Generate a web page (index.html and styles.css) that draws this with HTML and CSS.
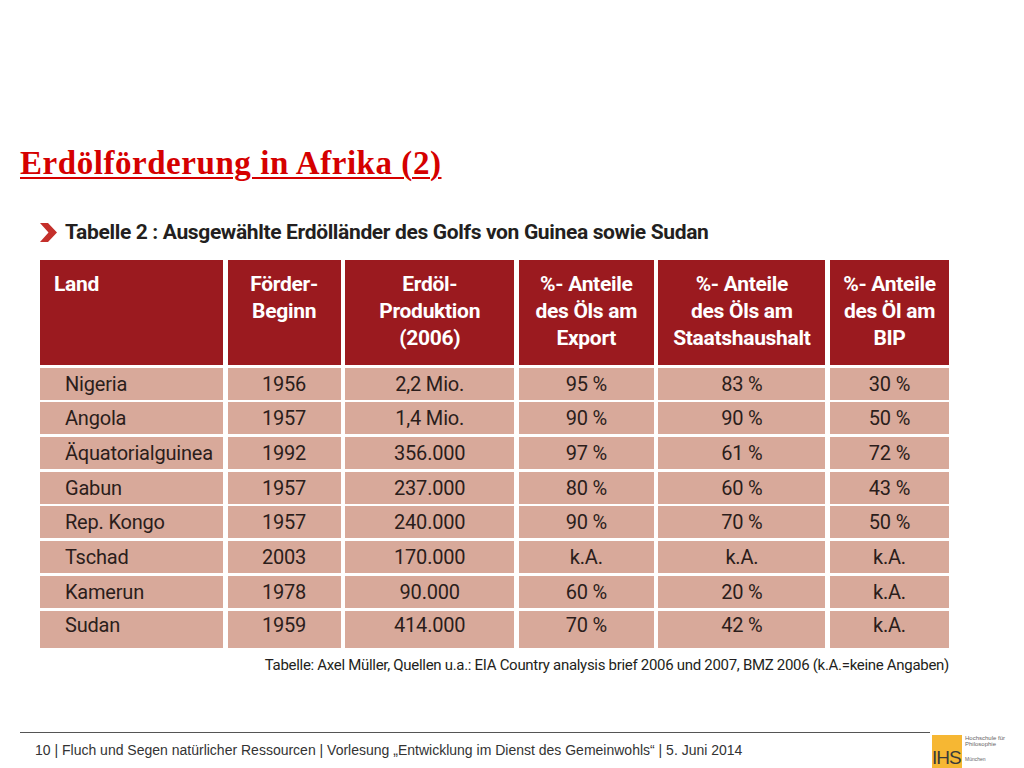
FILE: index.html
```html
<!DOCTYPE html>
<html lang="de">
<head>
<meta charset="utf-8">
<title>Erdölförderung in Afrika (2)</title>
<link rel="stylesheet" href="styles.css">
</head>
<body>
<div class="slide">
  <h1 class="title">Erdölförderung in Afrika (2)</h1>

  <div class="subtitle">
    <svg class="chevron" width="18" height="19" viewBox="0 0 18 19"><polygon points="0,0 8,0 17,9.5 8,19 0,19 8.5,9.5" fill="#c4302b"/></svg>
    <span>Tabelle 2 : Ausgewählte Erdölländer des Golfs von Guinea sowie Sudan</span>
  </div>

  <div class="table">
    <div class="th th-left">Land</div>
    <div class="th">Förder-<br>Beginn</div>
    <div class="th">Erdöl-<br>Produktion<br>(2006)</div>
    <div class="th">%- Anteile<br>des Öls am<br>Export</div>
    <div class="th">%- Anteile<br>des Öls am<br>Staatshaushalt</div>
    <div class="th">%- Anteile<br>des Öl am<br>BIP</div>

    <div class="td td-left">Nigeria</div><div class="td">1956</div><div class="td">2,2 Mio.</div><div class="td">95 %</div><div class="td">83 %</div><div class="td">30 %</div>
    <div class="td td-left">Angola</div><div class="td">1957</div><div class="td">1,4 Mio.</div><div class="td">90 %</div><div class="td">90 %</div><div class="td">50 %</div>
    <div class="td td-left">Äquatorialguinea</div><div class="td">1992</div><div class="td">356.000</div><div class="td">97 %</div><div class="td">61 %</div><div class="td">72 %</div>
    <div class="td td-left">Gabun</div><div class="td">1957</div><div class="td">237.000</div><div class="td">80 %</div><div class="td">60 %</div><div class="td">43 %</div>
    <div class="td td-left">Rep. Kongo</div><div class="td">1957</div><div class="td">240.000</div><div class="td">90 %</div><div class="td">70 %</div><div class="td">50 %</div>
    <div class="td td-left">Tschad</div><div class="td">2003</div><div class="td">170.000</div><div class="td">k.A.</div><div class="td">k.A.</div><div class="td">k.A.</div>
    <div class="td td-left">Kamerun</div><div class="td">1978</div><div class="td">90.000</div><div class="td">60 %</div><div class="td">20 %</div><div class="td">k.A.</div>
    <div class="td td-left last">Sudan</div><div class="td last">1959</div><div class="td last">414.000</div><div class="td last">70 %</div><div class="td last">42 %</div><div class="td last">k.A.</div>
  </div>

  <div class="caption">Tabelle: Axel Müller, Quellen u.a.: EIA Country analysis brief 2006 und 2007, BMZ 2006 (k.A.=keine Angaben)</div>

  <div class="footer">
    <div class="footer-text">10 | Fluch und Segen natürlicher Ressourcen | Vorlesung „Entwicklung im Dienst des Gemeinwohls“ | 5. Juni 2014</div>
    <div class="logo">
      <div class="logo-box"><span class="logo-ihs">IHS</span></div>
      <div class="logo-words">
        <span class="logo-small">Hochschule für<br>Philosophie</span>
        <span class="logo-small logo-city">München</span>
      </div>
    </div>
  </div>
</div>
</body>
</html>
```

FILE: styles.css
```css
html, body {
  margin: 0;
  padding: 0;
  background: #ffffff;
}

.slide {
  width: 1024px;
  height: 768px;
  display: flex;
  flex-direction: column;
  overflow: hidden;
}

.title {
  margin: 141px 0 0 20px;
  font-family: "Liberation Serif", "Times New Roman", serif;
  font-weight: bold;
  font-size: 33px;
  letter-spacing: 0.55px;
  line-height: 44px;
  color: #d50000;
  text-decoration: underline;
  text-decoration-thickness: 2px;
  text-underline-offset: 3px;
}

.subtitle {
  margin: 35px 0 0 40px;
  display: flex;
  align-items: center;
  gap: 7px;
  font-family: Roboto, "Noto Sans", sans-serif;
  font-weight: bold;
  font-size: 21px;
  letter-spacing: -0.35px;
  line-height: 24px;
  color: #231f20;
}

.chevron {
  flex: none;
}

.table {
  margin: 16px 0 0 40px;
  display: grid;
  grid-template-columns: 183px 113px 169px 135px 167px 119px;
  grid-template-rows: 105px repeat(7, 32px) 37px;
  column-gap: 4.6px;
  row-gap: 2.7px;
  font-family: Roboto, "Noto Sans", sans-serif;
}

.th {
  background: #9b1a1f;
  color: #ffffff;
  font-weight: bold;
  font-size: 21px;
  letter-spacing: -0.3px;
  line-height: 27px;
  text-align: center;
  padding-top: 11px;
}

.th-left {
  text-align: left;
  padding-left: 14px;
}

.td {
  background: #d8a99a;
  color: #2b1d1b;
  font-size: 20px;
  letter-spacing: -0.2px;
  display: flex;
  align-items: center;
  justify-content: center;
}

.td-left {
  justify-content: flex-start;
  padding-left: 25px;
}

.td.last {
  align-items: flex-start;
  padding-top: 2px;
}

.caption {
  margin: 7px 0 0 0;
  width: 949px;
  text-align: right;
  font-family: Roboto, "Noto Sans", sans-serif;
  font-size: 15px;
  letter-spacing: -0.3px;
  line-height: 20px;
  color: #231f20;
}

.footer {
  margin-top: auto;
  display: flex;
  align-items: flex-start;
  height: 36px;
}

.footer-text {
  margin-left: 20px;
  width: 910px;
  border-top: 1px solid #555555;
  padding: 9px 0 0 15px;
  box-sizing: border-box;
  font-family: "Liberation Sans", Arial, sans-serif;
  font-size: 14px;
  letter-spacing: 0;
  color: #333333;
  line-height: 16px;
}

.logo {
  margin-left: 2px;
  margin-top: 3px;
  display: flex;
  gap: 3px;
}

.logo-box {
  width: 30px;
  height: 33px;
  background: #f6b733;
  display: flex;
  align-items: flex-end;
}

.logo-ihs {
  font-family: "Liberation Sans", Arial, sans-serif;
  font-size: 19px;
  line-height: 20px;
  color: #3a3a3a;
  letter-spacing: -1px;
  margin-left: 0;
}

.logo-words {
  display: flex;
  flex-direction: column;
  justify-content: space-between;
  height: 27px;
}

.logo-small {
  font-family: "Liberation Sans", Arial, sans-serif;
  font-size: 6px;
  line-height: 6px;
  color: #666666;
}

.logo-city {
  font-size: 5px;
}
```
